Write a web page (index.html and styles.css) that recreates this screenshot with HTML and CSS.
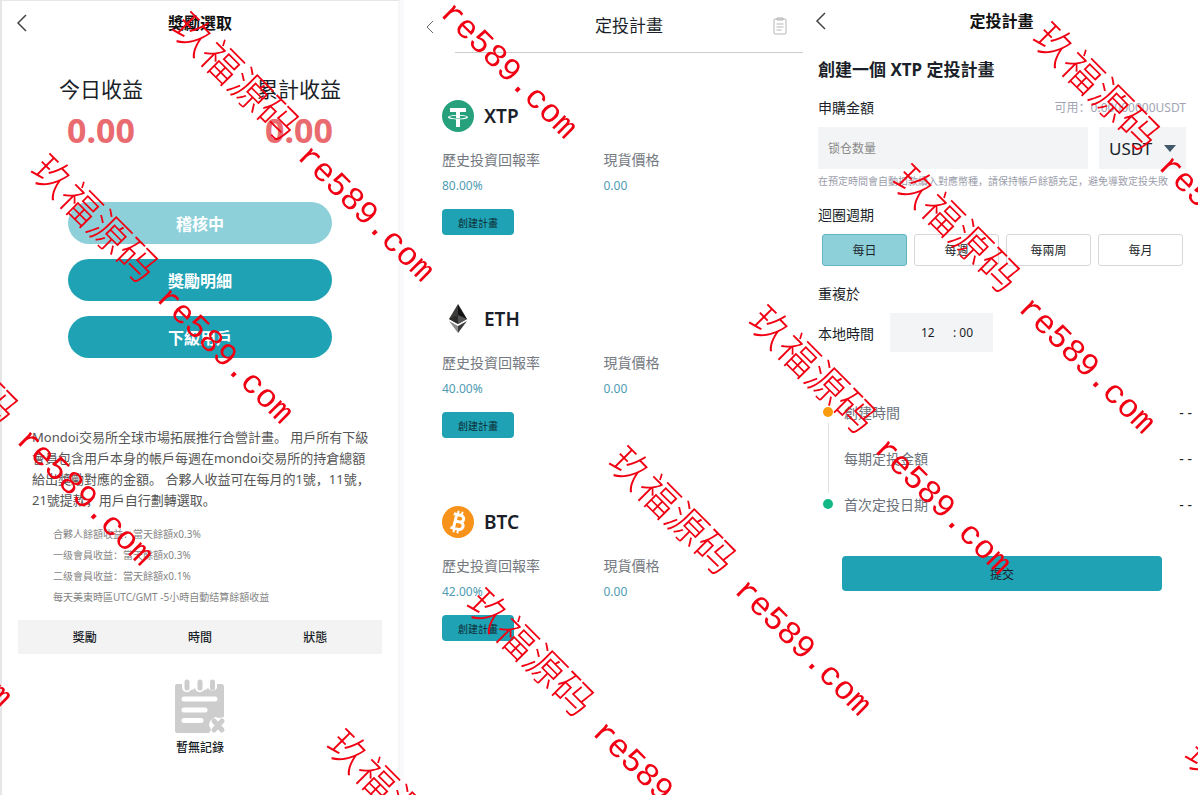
FILE: index.html
```html
<!DOCTYPE html>
<html lang="zh">

<head>
    <meta charset="UTF-8">
    <meta name="viewport" content="width=device-width, initial-scale=1.0">
    <title>定投計畫</title>
    <link rel="stylesheet" href="styles.css">
</head>

<body>
    <div class="screens">
        <!-- 獎勵選取 -->
        <section class="screen reward">
            <header class="bar">
                <button class="back" type="button" aria-label="返回">
                    <svg width="12" height="18" viewBox="0 0 12 18"><path d="M10 1 2 9l8 8" /></svg>
                </button>
                <h1>獎勵選取</h1>
            </header>
            <div class="income">
                <div>
                    <div class="income-name">今日收益</div>
                    <div class="income-num">0.00</div>
                </div>
                <div>
                    <div class="income-name">累計收益</div>
                    <div class="income-num">0.00</div>
                </div>
            </div>
            <div class="reward-btns">
                <button class="pill light" type="button">稽核中</button>
                <button class="pill" type="button">獎勵明細</button>
                <button class="pill" type="button">下級用戶</button>
            </div>
            <p class="intro">Mondoi交易所全球市場拓展推行合營計畫。 用戶所有下級<br>會員包含用戶本身的帳戶每週在mondoi交易所的持倉總額<br>給出獎勵對應的金額。 合夥人收益可在每月的1號，11號，<br>21號提款，用戶自行劃轉選取。</p>
            <ul class="rates">
                <li>合夥人餘額收益：當天餘額x0.3%</li>
                <li>一级會員收益：當天餘額x0.3%</li>
                <li>二级會員收益：當天餘額x0.1%</li>
                <li>每天美東時區UTC/GMT -5小時自動结算餘額收益</li>
            </ul>
            <div class="record-head">
                <table>
                    <thead>
                        <tr>
                            <th>獎勵</th>
                            <th>時間</th>
                            <th>狀態</th>
                        </tr>
                    </thead>
                </table>
            </div>
            <div class="empty">
                <svg width="52" height="56" viewBox="0 0 52 56">
                    <path fill="#cdcdcd" d="M3 6h5v4a5 5 0 0 0 9 2 5 5 0 0 0 4-2 5 5 0 0 0 9 2 5 5 0 0 0 4-2 5 5 0 0 0 9 0V6h4a3 3 0 0 1 3 3v30l-5 1-4-1-5 4-1 4 2 5-2 3H3a2 2 0 0 1-2-2V8a2 2 0 0 1 2-2z" />
                    <g stroke="#cdcdcd" stroke-width="5" stroke-linecap="round">
                        <path d="M13 4v6M26 4v6M38.500 4v6" />
                        <path stroke-width="5" d="m40 43 8 9M48 43l-8 9" />
                    </g>
                    <path stroke="#fff" stroke-width="5" stroke-linecap="round" d="M10 21h31M10 32h21M10 42.500h17" />
                </svg>
                <div>暫無記錄</div>
            </div>
        </section>

        <!-- 定投列表 -->
        <section class="screen plans">
            <header class="plans-bar">
                <button class="back small" type="button" aria-label="返回">
                    <svg width="8" height="14" viewBox="0 0 8 14"><path d="M7 1 1 7l6 6" /></svg>
                </button>
                <div class="plans-title">
                    <h1>定投計畫</h1>
                    <button class="orders" type="button" aria-label="訂單">
                        <svg width="14" height="18" viewBox="0 0 14 18">
                            <rect x="1" y="2" width="12" height="15" rx="1" />
                            <path d="M4 3V1h6v2zM3.500 7h7M3.500 10h7M3.500 13h5" />
                        </svg>
                    </button>
                </div>
            </header>
            <article class="coin">
                <h2>
                    <svg width="32" height="32" viewBox="0 0 32 32">
                        <circle cx="16" cy="16" r="16" fill="#26a17b" />
                        <path fill="#fff" d="M8 8h16v4h-6v3c5 .2 8 1 8 2.200s-3 2-8 2.200V27h-4v-7.600c-5-.2-8-1-8-2.200s3-2 8-2.200v-3H8zm6 7.800c-4 .2-6.500.7-6.500 1.300 0 .8 4 1.500 8.500 1.500s8.500-.7 8.500-1.500c0-.6-2.500-1.100-6.500-1.300V18h-4z" />
                    </svg>
                    XTP
                </h2>
                <dl>
                    <div><dt>歷史投資回報率</dt><dd>80.00%</dd></div>
                    <div><dt>現貨價格</dt><dd>0.00</dd></div>
                </dl>
                <button class="create" type="button">創建計畫</button>
            </article>
            <article class="coin">
                <h2>
                    <svg width="32" height="32" viewBox="0 0 32 32">
                        <path fill="#3c3c3b" d="M16 1 7 16l9 5z" />
                        <path fill="#141414" d="m16 1 9 15-9 5z" />
                        <path fill="#2b2b2b" d="m7 16 9-4v9z" />
                        <path fill="#555" d="m16 12 9 4-9 5z" />
                        <path fill="#8c8c8c" d="m7 18 9 5v7z" />
                        <path fill="#3c3c3b" d="m25 18-9 5v7z" />
                    </svg>
                    ETH
                </h2>
                <dl>
                    <div><dt>歷史投資回報率</dt><dd>40.00%</dd></div>
                    <div><dt>現貨價格</dt><dd>0.00</dd></div>
                </dl>
                <button class="create" type="button">創建計畫</button>
            </article>
            <article class="coin">
                <h2>
                    <svg width="32" height="32" viewBox="0 0 32 32">
                        <circle cx="16" cy="16" r="16" fill="#f7931a" />
                        <g transform="rotate(14 16 16)" fill="none" stroke="#fff">
                            <path stroke-width="3" d="M13 8.500v15M10 9h7.500a3.200 3.200 0 0 1 0 6.600H13M17.500 15.600h.8a3.600 3.600 0 0 1 0 7.400H10" />
                            <path stroke-width="2" d="M14 5v4M18 5v4M14 23v4M18 23v4" />
                        </g>
                    </svg>
                    BTC
                </h2>
                <dl>
                    <div><dt>歷史投資回報率</dt><dd>42.00%</dd></div>
                    <div><dt>現貨價格</dt><dd>0.00</dd></div>
                </dl>
                <button class="create" type="button">創建計畫</button>
            </article>
        </section>

        <!-- 創建定投 -->
        <section class="screen create-plan">
            <header class="bar">
                <button class="back" type="button" aria-label="返回">
                    <svg width="12" height="18" viewBox="0 0 12 18"><path d="M10 1 2 9l8 8" /></svg>
                </button>
                <h1>定投計畫</h1>
            </header>
            <form class="plan-form">
                <h2>創建一個 XTP 定投計畫</h2>
                <div class="row">
                    <label for="amount">申購金額</label>
                    <span class="usable">可用：0.00000000USDT</span>
                </div>
                <div class="amount">
                    <input type="text" id="amount" placeholder="锁仓数量">
                    <div class="currency">
                        <select aria-label="幣種">
                            <option>USDT</option>
                        </select>
                        <svg width="12" height="7" viewBox="0 0 12 7"><path fill="#41596b" d="M0 0h12L6 7z" /></svg>
                    </div>
                </div>
                <p class="hint">在預定時間會自動扣款續入對應幣種，請保持帳戶餘額充足，避免導致定投失敗</p>
                <div class="label">迴圈週期</div>
                <div class="cycle">
                    <button class="active" type="button">每日</button>
                    <button type="button">每週</button>
                    <button type="button">每兩周</button>
                    <button type="button">每月</button>
                </div>
                <div class="label repeat">重複於</div>
                <div class="time">
                    <label for="hour">本地時間</label>
                    <div class="time-box">
                        <select id="hour">
                            <option>12</option>
                        </select>
                        <span>: 00</span>
                    </div>
                </div>
                <ul class="steps">
                    <li class="start"><span>創建時間</span><span class="val">- -</span></li>
                    <li><span>每期定投金額</span><span class="val">- -</span></li>
                    <li class="end"><span>首次定投日期</span><span class="val">- -</span></li>
                </ul>
                <button class="submit" type="button">提交</button>
            </form>
        </section>
    </div>

    <div class="marks" aria-hidden="true">
        <div class="mark m1">玖福源码<span>re589.com</span></div>
        <div class="mark m2">玖福源码<span>re589.com</span></div>
        <div class="mark m3">玖福源码<span>re589.com</span></div>
        <div class="mark m4">玖福源码<span>re589.com</span></div>
        <div class="mark m5">玖福源码<span>re589.com</span></div>
        <div class="mark m6">玖福源码<span>re589.com</span></div>
        <div class="mark m7">玖福源码<span>re589.com</span></div>
        <div class="mark m8">玖福源码<span>re589.com</span></div>
        <div class="mark m9">玖福源码<span>re589.com</span></div>
        <div class="mark m10">玖福源码<span>re589.com</span></div>
        <div class="mark m11">玖福源码<span>re589.com</span></div>
        <div class="mark m12">玖福源码<span>re589.com</span></div>
    </div>
</body>

</html>
```
FILE: styles.css
```css
* {
    box-sizing: border-box;
    margin: 0;
    padding: 0;
}

body {
    font-family: "Noto Sans", "Noto Sans CJK SC", sans-serif;
    font-size: 14px;
    color: #1a1f29;
    background: #fff;
}

button,
input,
select {
    font-family: inherit;
    color: inherit;
    border: none;
    background: none;
    outline: none;
}

button {
    cursor: pointer;
}

ul {
    list-style: none;
}

.screens {
    display: grid;
    grid-template-columns: 400fr 403fr 395fr;
    min-height: 100vh;
}

.screen {
    min-width: 0;
}

/* 頂部 */
.bar {
    display: grid;
    grid-template-columns: 24px 1fr 24px;
    align-items: center;
    padding: 0 14px;
}

.bar h1 {
    font-size: 16px;
    line-height: 24px;
    text-align: center;
    color: #111;
}

.back {
    display: flex;
}

.back svg {
    fill: none;
    stroke: #444;
    stroke-width: 1.5;
}

/* 獎勵選取 */
.reward {
    border: 1px solid #e6e6e6;
    border-width: 1px 2px 0;
    border-right-color: #f6f6f6;
}

.reward .bar {
    padding-top: 10px;
}

.income {
    display: grid;
    grid-template-columns: 1fr 1fr;
    margin-top: 40px;
    text-align: center;
}

.income-name {
    font-size: 21px;
    line-height: 28px;
}

.income-num {
    font-size: 34px;
    font-weight: 700;
    line-height: 54px;
    color: #e96b70;
}

.reward-btns {
    display: grid;
    gap: 15px;
    margin: 45px 66px 0;
}

.pill {
    height: 42px;
    border-radius: 21px;
    background: #1fa2b4;
    color: #fff;
    font-size: 16px;
    font-weight: 700;
}

.pill.light {
    background: #8dd0da;
}

.intro {
    margin: 69px 0 0 30px;
    font-size: 13px;
    line-height: 21px;
    white-space: nowrap;
    color: #555;
}

.rates {
    margin: 13px 0 0 51px;
    font-size: 10px;
    line-height: 21px;
    color: #858585;
}

.record-head {
    margin: 12px 16px 0;
    padding: 0 9px;
    background: #f3f3f3;
}

.record-head table {
    width: 100%;
    table-layout: fixed;
    border-collapse: collapse;
}

.record-head th {
    height: 34px;
    font-size: 12px;
    font-weight: 500;
}

.empty {
    margin-top: 24px;
    text-align: center;
    font-size: 12px;
    font-weight: 500;
    line-height: 18px;
}

.empty svg {
    fill: none;
}

/* 定投列表 */
.plans {
    border-left: 4px solid #fafafd;
}

.plans-bar {
    display: flex;
    align-items: center;
    padding-left: 22px;
}

.back.small svg {
    stroke: #666;
    stroke-width: 1;
}

.plans-title {
    flex: 1;
    display: grid;
    grid-template-columns: 1fr auto 1fr;
    align-items: center;
    height: 53px;
    margin-left: 21px;
    padding: 0 16px;
    border-bottom: 1px solid #ccc;
}

.plans-title h1 {
    grid-column: 2;
    font-size: 17px;
    font-weight: 400;
    line-height: 26px;
}

.orders {
    justify-self: end;
}

.orders svg {
    display: block;
    fill: none;
    stroke: #b5b5b5;
}

.coin {
    padding: 47px 38px 0;
}

.coin + .coin {
    padding-top: 68px;
}

.coin h2 {
    display: flex;
    align-items: center;
    gap: 10px;
    height: 32px;
    font-size: 19px;
    font-weight: 600;
}

.coin dl {
    display: grid;
    grid-template-columns: 1fr 1fr;
    margin-top: 16px;
}

.coin dt {
    font-size: 14px;
    line-height: 24px;
    color: #757a82;
}

.coin dd {
    margin-top: 4px;
    font-size: 12px;
    line-height: 20px;
    color: #4f9bb2;
}

.create {
    display: block;
    width: 72px;
    height: 26px;
    margin-top: 13px;
    border-radius: 4px;
    background: #1fa2b4;
    font-size: 10px;
    color: #0d2a33;
}

/* 創建定投 */
.create-plan .bar {
    padding: 9px 10px 0 12px;
}

.plan-form {
    padding: 24px 12px 0 15px;
}

.plan-form h2 {
    font-size: 17px;
    line-height: 26px;
}

.row {
    display: flex;
    justify-content: space-between;
    align-items: center;
    margin-top: 13px;
    line-height: 24px;
}

.usable {
    font-size: 12px;
    color: #a2a4b3;
}

.amount {
    display: flex;
    gap: 11px;
    margin-top: 7px;
}

.amount input {
    flex: 1;
    min-width: 0;
    height: 42px;
    padding: 0 10px;
    background: #f3f4f5;
    font-size: 12px;
}

.amount input::placeholder {
    color: #8a8a8a;
}

.currency {
    display: flex;
    align-items: center;
    width: 87px;
    padding: 0 10px;
    background: #f3f4f5;
}

.currency select {
    flex: 1;
    min-width: 0;
    appearance: none;
    font-size: 17px;
}

.hint {
    margin-top: 2px;
    font-size: 10px;
    line-height: 20px;
    white-space: nowrap;
    color: #9b9dab;
}

.label {
    margin-top: 12px;
    line-height: 24px;
}

.cycle {
    display: grid;
    grid-template-columns: repeat(4, 1fr);
    gap: 7px;
    margin-top: 7px;
    padding: 0 3px 0 4px;
}

.cycle button {
    height: 32px;
    border: 1px solid #d5d7da;
    border-radius: 3px;
    font-size: 12px;
}

.cycle .active {
    border-color: #62b5c0;
    background: #8dd0da;
}

.label.repeat {
    margin-top: 16px;
}

.time {
    display: flex;
    align-items: center;
    gap: 16px;
    margin-top: 7px;
}

.time-box {
    display: flex;
    align-items: center;
    width: 103px;
    height: 39px;
    padding-left: 31px;
    background: #f3f4f5;
    font-size: 12px;
}

.time-box select {
    width: 32px;
    appearance: none;
    font-size: 12px;
}

.steps {
    position: relative;
    margin: 37px -6px 0 5px;
    color: #6c727c;
}

.steps::before {
    content: "";
    position: absolute;
    left: 5px;
    top: 34px;
    bottom: 34px;
    width: 1px;
    background: #e2e2e2;
}

.steps li {
    display: flex;
    align-items: center;
    height: 46px;
}

.steps li::before {
    content: "";
    width: 10px;
    height: 10px;
    margin-right: 11px;
    border-radius: 50%;
}

.steps .start::before {
    background: #f89c0e;
}

.steps .end::before {
    background: #12b886;
}

.steps .val {
    margin-left: auto;
    color: #1a1f29;
}

.submit {
    display: block;
    width: calc(100% - 48px);
    height: 35px;
    margin: 29px 24px 0;
    border-radius: 4px;
    background: #1fa2b4;
    font-size: 12px;
}

/* 浮水印 */
.marks {
    position: fixed;
    inset: 0;
    overflow: hidden;
    pointer-events: none;
}

.mark {
    position: absolute;
    font-family: "Liberation Mono", "Noto Sans CJK SC", monospace;
    font-size: 40px;
    font-weight: 300;
    line-height: 40px;
    white-space: nowrap;
    color: #f00012;
    transform: rotate(45deg);
    transform-origin: 20px 20px;
}

.mark span {
    margin-left: 20px;
    font-size: 33px;
}

.m1 { left: 170px; top: 17px; }
.m2 { left: 29px; top: 159px; }
.m3 { left: -111px; top: 301px; }
.m4 { left: -252px; top: 443px; }
.m5 { left: 313px; top: -126px; }
.m6 { left: 747px; top: 310px; }
.m7 { left: 607px; top: 451px; }
.m8 { left: 465px; top: 593px; }
.m9 { left: 325px; top: 734px; }
.m10 { left: 1031px; top: 27px; }
.m11 { left: 891px; top: 169px; }
.m12 { left: 1183px; top: 744px; }
```
